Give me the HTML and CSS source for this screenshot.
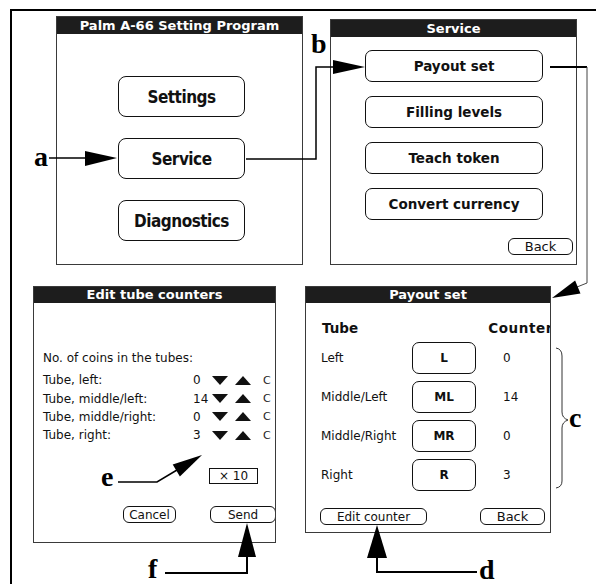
FILE: index.html
```html
<!DOCTYPE html>
<html lang="en">
<head>
    <meta charset="UTF-8">
    <meta name="viewport" content="width=device-width, initial-scale=1.0">
    <title>Palm A-66 Setting Program</title>
    <link rel="stylesheet" href="styles.css">
</head>
<body>
    <div class="canvas">
        <!-- Main menu -->
        <section class="screen screen-main">
            <div class="screen-title">Palm A-66 Setting Program</div>
            <div class="main-menu">
                <div class="btn btn-big">Settings</div>
                <div class="btn btn-big">Service</div>
                <div class="btn btn-big">Diagnostics</div>
            </div>
        </section>

        <!-- Service menu -->
        <section class="screen screen-service">
            <div class="screen-title">Service</div>
            <div class="service-menu">
                <div class="btn btn-menu">Payout set</div>
                <div class="btn btn-menu">Filling levels</div>
                <div class="btn btn-menu">Teach token</div>
                <div class="btn btn-menu">Convert currency</div>
            </div>
            <div class="screen-footer footer-right">
                <div class="btn btn-small btn-back">Back</div>
            </div>
        </section>

        <!-- Edit tube counters -->
        <section class="screen screen-edit">
            <div class="screen-title title-small">Edit tube counters</div>
            <div class="edit-body">
                <p class="edit-intro">No. of coins in the tubes:</p>
                <div class="edit-grid">
                    <span>Tube, left:</span><span>0</span>
                    <span class="tri tri-down"></span><span class="tri tri-up"></span><span class="clip">C</span>
                    <span>Tube, middle/left:</span><span>14</span>
                    <span class="tri tri-down"></span><span class="tri tri-up"></span><span class="clip">C</span>
                    <span>Tube, middle/right:</span><span>0</span>
                    <span class="tri tri-down"></span><span class="tri tri-up"></span><span class="clip">C</span>
                    <span>Tube, right:</span><span>3</span>
                    <span class="tri tri-down"></span><span class="tri tri-up"></span><span class="clip">C</span>
                </div>
                <div class="times-box">&times; 10</div>
            </div>
            <div class="screen-footer edit-footer">
                <div class="btn btn-small btn-cancel">Cancel</div>
                <div class="btn btn-small btn-send">Send</div>
            </div>
        </section>

        <!-- Payout set -->
        <section class="screen screen-payout">
            <div class="screen-title title-small">Payout set</div>
            <div class="payout-head">
                <span>Tube</span>
                <span class="head-counter">Counter</span>
            </div>
            <div class="payout-grid">
                <span>Left</span><div class="btn btn-tube">L</div><span class="count">0</span>
                <span>Middle/Left</span><div class="btn btn-tube">ML</div><span class="count">14</span>
                <span>Middle/Right</span><div class="btn btn-tube">MR</div><span class="count">0</span>
                <span>Right</span><div class="btn btn-tube">R</div><span class="count">3</span>
            </div>
            <div class="screen-footer payout-footer">
                <div class="btn btn-small btn-edit">Edit counter</div>
                <div class="btn btn-small btn-back">Back</div>
            </div>
        </section>

        <!-- Frame, connectors and callout letters -->
        <svg class="links" width="599" height="584" viewBox="0 0 599 584">
            <line x1="10" y1="10" x2="596" y2="10" stroke="#000" stroke-width="2"/>
            <line x1="11" y1="9" x2="11" y2="584" stroke="#000" stroke-width="2"/>

            <line x1="49" y1="158" x2="86" y2="158" stroke="#000" stroke-width="1.5"/>
            <polygon points="85,151 85,166 117,158" fill="#000"/>

            <polyline points="246,159 316,159 316,67 334,67" fill="none" stroke="#000" stroke-width="1.5"/>
            <polygon points="333,60 333,74 365,67" fill="#000"/>

            <polyline points="550,67 587,67" fill="none" stroke="#000" stroke-width="2"/>
            <polyline points="587,67 587,283 577,287" fill="none" stroke="#444" stroke-width="1"/>
            <polygon points="552,298 580.5,293.4 575.1,280.6" fill="#000"/>

            <path d="M556 348 Q562 349 562 356 L562 412 Q562 418 568 420 Q562 422 562 428 L562 481 Q562 487 556 488" fill="none" stroke="#333" stroke-width="1"/>

            <polyline points="477,572 377,572 377,556" fill="none" stroke="#000" stroke-width="2"/>
            <polygon points="367,558 387,558 377,525" fill="#000"/>

            <polyline points="118,482 157,482 177,470" fill="none" stroke="#000" stroke-width="1.5"/>
            <polygon points="202,455 179.9,476.4 172.7,464.4" fill="#000"/>

            <polyline points="165,573 247,573 247,556" fill="none" stroke="#000" stroke-width="2"/>
            <polygon points="238,557 256,557 247,523" fill="#000"/>

            <text class="callout" x="34" y="166">a</text>
            <text class="callout" x="311" y="53">b</text>
            <text class="callout" x="569" y="427">c</text>
            <text class="callout" x="479" y="579">d</text>
            <text class="callout" x="101" y="486">e</text>
            <text class="callout" x="148" y="578">f</text>
        </svg>
    </div>
</body>
</html>
```

FILE: styles.css
```css
* {
    box-sizing: border-box;
}
body {
    margin: 0;
    background-color: #fff;
    font-family: "DejaVu Sans", "Noto Sans", sans-serif;
    color: #111;
}
.canvas {
    position: relative;
    width: 599px;
    height: 584px;
    overflow: hidden;
}
.links {
    position: absolute;
    left: 0;
    top: 0;
    pointer-events: none;
}
.callout {
    font-family: "Liberation Serif", serif;
    font-weight: bold;
    font-size: 28px;
    fill: #000;
}

/* Palm screens */
.screen {
    position: absolute;
    display: flex;
    flex-direction: column;
    background-color: #fff;
    border: 1px solid #3a3a3a;
    overflow: hidden;
}
.screen-title {
    flex: none;
    height: 17px;
    line-height: 17px;
    background-color: #1d1d1d;
    color: #fff;
    font-weight: bold;
    font-size: 13px;
    text-align: center;
    white-space: nowrap;
}
.title-small {
    height: 16px;
    line-height: 16px;
}
.screen-footer {
    margin-top: auto;
    display: flex;
}

.btn {
    display: flex;
    align-items: center;
    justify-content: center;
    border: 1.5px solid #111;
    border-radius: 7px;
    background-color: #fff;
    white-space: nowrap;
}
.btn-big {
    width: 127px;
    height: 41px;
    font-family: "DejaVu Sans Condensed", "DejaVu Sans", sans-serif;
    font-weight: bold;
    font-size: 17px;
    letter-spacing: -0.5px;
    border-radius: 8px;
}
.btn-menu {
    width: 178px;
    height: 32px;
    font-weight: bold;
    font-size: 13.5px;
}
.btn-small {
    height: 17px;
    font-size: 12px;
    border-radius: 6px;
    border-width: 1px;
}
.btn-tube {
    height: 32px;
    font-weight: bold;
    font-size: 12px;
}

/* Main menu */
.screen-main {
    left: 56px;
    top: 16px;
    width: 247px;
    height: 249px;
}
.main-menu {
    display: flex;
    flex-direction: column;
    gap: 21px;
    padding: 42px 0 0 61px;
}

/* Service */
.screen-service {
    left: 330px;
    top: 19px;
    width: 247px;
    height: 246px;
}
.service-menu {
    display: flex;
    flex-direction: column;
    gap: 14px;
    padding: 13px 0 0 34px;
}
.footer-right {
    justify-content: flex-end;
    padding: 0 3px 9px 0;
}
.btn-back {
    width: 65px;
    font-size: 13px;
}

/* Edit tube counters */
.screen-edit {
    left: 33px;
    top: 286px;
    width: 243px;
    height: 257px;
    font-size: 12px;
}
.edit-body {
    padding: 46px 0 0 9px;
}
.edit-intro {
    margin: 0 0 4px;
    line-height: 18px;
}
.edit-grid {
    display: grid;
    grid-template-columns: 150px 19px 23px 28px auto;
    grid-auto-rows: 18.4px;
    align-items: center;
}
.tri {
    width: 0;
    height: 0;
    border-left: 8.5px solid transparent;
    border-right: 8.5px solid transparent;
}
.tri-down {
    border-top: 9px solid #111;
}
.tri-up {
    border-bottom: 9px solid #111;
}
.clip {
    color: #222;
    font-size: 11px;
}
.times-box {
    width: 49px;
    height: 16px;
    margin: 23px 0 0 166px;
    border: 1px solid #111;
    line-height: 14px;
    text-align: center;
}
.edit-footer {
    justify-content: flex-end;
    gap: 34px;
    padding-bottom: 19px;
}
.btn-cancel {
    width: 53px;
}
.btn-send {
    width: 66px;
    margin-right: -1px;
}

/* Payout set */
.screen-payout {
    left: 305px;
    top: 286px;
    width: 246px;
    height: 247px;
    font-size: 12px;
}
.payout-head {
    display: flex;
    padding: 17px 0 0 16px;
    line-height: 16px;
    font-weight: bold;
    font-size: 13.5px;
    white-space: nowrap;
}
.head-counter {
    margin-left: 130px;
    letter-spacing: 0.6px;
}
.payout-grid {
    display: grid;
    grid-template-columns: 91px 64px auto;
    grid-auto-rows: 32px;
    row-gap: 7px;
    align-items: center;
    margin-top: 6px;
    padding-left: 15px;
}
.payout-grid .btn-tube {
    width: 64px;
}
.count {
    padding-left: 27px;
}
.payout-footer {
    justify-content: space-between;
    padding: 0 5px 7px 14px;
}
.btn-edit {
    width: 107px;
}
```
